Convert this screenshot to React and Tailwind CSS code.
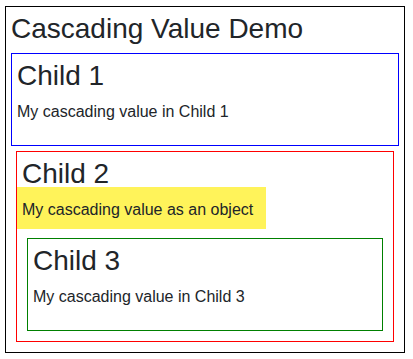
export default function App() {
  return (
    <div className="ml-[5px] mt-[6px] w-[400px] border border-black p-[5px] font-['Liberation_Sans',Arial,sans-serif] text-[#212529]">
      <h1 className="mb-[7px] text-[28px] leading-[34px] font-normal">Cascading Value Demo</h1>

      <div className="border border-[#0000ff] p-[5px]">
        <h2 className="mb-[7px] text-[28px] leading-[34px] font-normal">Child 1</h2>
        <p className="mb-4 text-base leading-6">My cascading value in Child 1</p>
      </div>

      <div className="m-[5px] border border-[#ff0000] p-[5px]">
        <h2 className="mb-[7px] text-[28px] leading-[34px] font-normal">Child 2</h2>
        <p className="-mt-[11px] mb-[9px] -ml-[5px] w-[249px] bg-[#fff35a] pt-[11px] pb-[7px] pl-[5px] text-base leading-6">
          My cascading value as an object
        </p>

        <div className="m-[5px] border border-[#008000] p-[5px]">
          <h2 className="mb-[7px] text-[28px] leading-[34px] font-normal">Child 3</h2>
          <p className="mb-4 text-base leading-6">My cascading value in Child 3</p>
        </div>
      </div>
    </div>
  );
}
